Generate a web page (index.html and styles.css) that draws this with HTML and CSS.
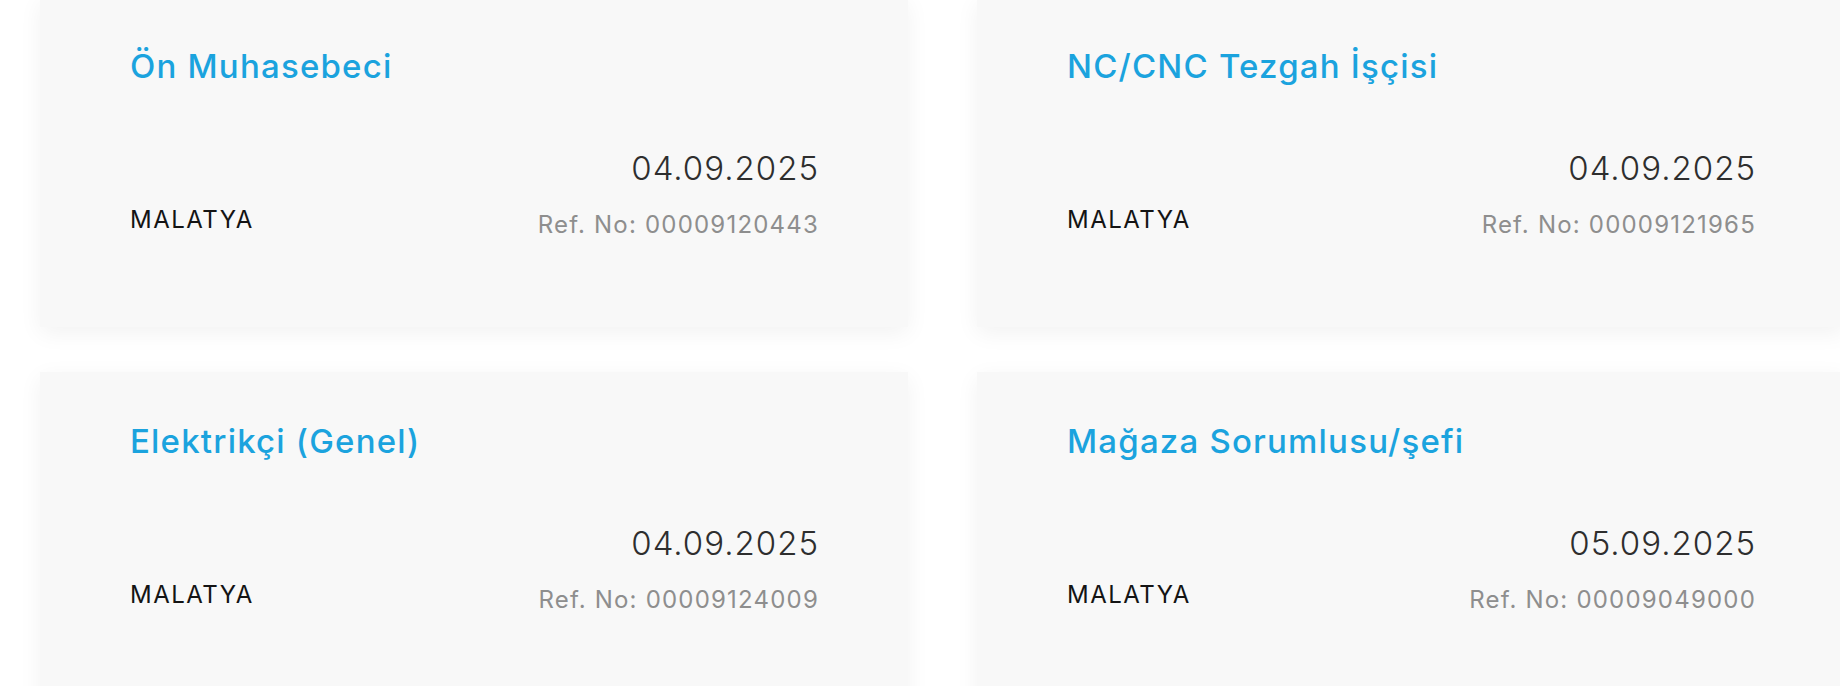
FILE: index.html
```html
<!DOCTYPE html>
<html lang="tr">
<head>
    <meta charset="UTF-8">
    <title>İş İlanları</title>
    <link rel="stylesheet" href="styles.css">
</head>
<body>
    <div class="job-list">
        <a class="job-card" href="#">
            <h3 class="job-title">Ön Muhasebeci</h3>
            <div class="job-meta">
                <span class="job-city">MALATYA</span>
                <div class="job-info">
                    <span class="job-date">04.09.2025</span>
                    <span class="job-ref">Ref. No: 00009120443</span>
                </div>
            </div>
        </a>
        <a class="job-card" href="#">
            <h3 class="job-title">NC/CNC Tezgah İşçisi</h3>
            <div class="job-meta">
                <span class="job-city">MALATYA</span>
                <div class="job-info">
                    <span class="job-date">04.09.2025</span>
                    <span class="job-ref">Ref. No: 00009121965</span>
                </div>
            </div>
        </a>
        <a class="job-card" href="#">
            <h3 class="job-title">Elektrikçi (Genel)</h3>
            <div class="job-meta">
                <span class="job-city">MALATYA</span>
                <div class="job-info">
                    <span class="job-date">04.09.2025</span>
                    <span class="job-ref">Ref. No: 00009124009</span>
                </div>
            </div>
        </a>
        <a class="job-card" href="#">
            <h3 class="job-title">Mağaza Sorumlusu/şefi</h3>
            <div class="job-meta">
                <span class="job-city">MALATYA</span>
                <div class="job-info">
                    <span class="job-date">05.09.2025</span>
                    <span class="job-ref">Ref. No: 00009049000</span>
                </div>
            </div>
        </a>
    </div>
</body>
</html>
```
FILE: styles.css
```css
body {
    margin: 0;
    background-color: #ffffff;
    font-family: "Inter", "Lato", sans-serif;
    overflow: hidden;
}

.job-list {
    display: grid;
    grid-template-columns: 868px 868px;
    column-gap: 69px;
    row-gap: 45px;
    padding-left: 40px;
    margin-top: -3px;
}

.job-card {
    display: flex;
    flex-direction: column;
    padding: 49px 90px 87px 90px;
    background: #f8f8f8;
    box-shadow: 0 6px 22px rgba(0, 0, 0, 0.055);
    text-decoration: none;
}

.job-title {
    margin: 0;
    font-size: 33px;
    line-height: 40px;
    font-weight: 500;
    letter-spacing: 1.2px;
    color: #1ba3de;
}

.job-meta {
    display: flex;
    justify-content: space-between;
    align-items: flex-end;
    margin-top: 62px;
}

.job-city {
    font-size: 24px;
    line-height: 30px;
    letter-spacing: 1.5px;
    color: #141414;
    margin-bottom: 5px;
}

.job-info {
    display: flex;
    flex-direction: column;
    align-items: flex-end;
    margin-right: -1px;
}

.job-date {
    font-size: 33px;
    line-height: 40px;
    font-weight: 300;
    letter-spacing: 1px;
    color: #2e2e2e;
}

.job-ref {
    margin-top: 22px;
    font-size: 24px;
    line-height: 30px;
    letter-spacing: 1.2px;
    color: #8e8e8e;
}
```
